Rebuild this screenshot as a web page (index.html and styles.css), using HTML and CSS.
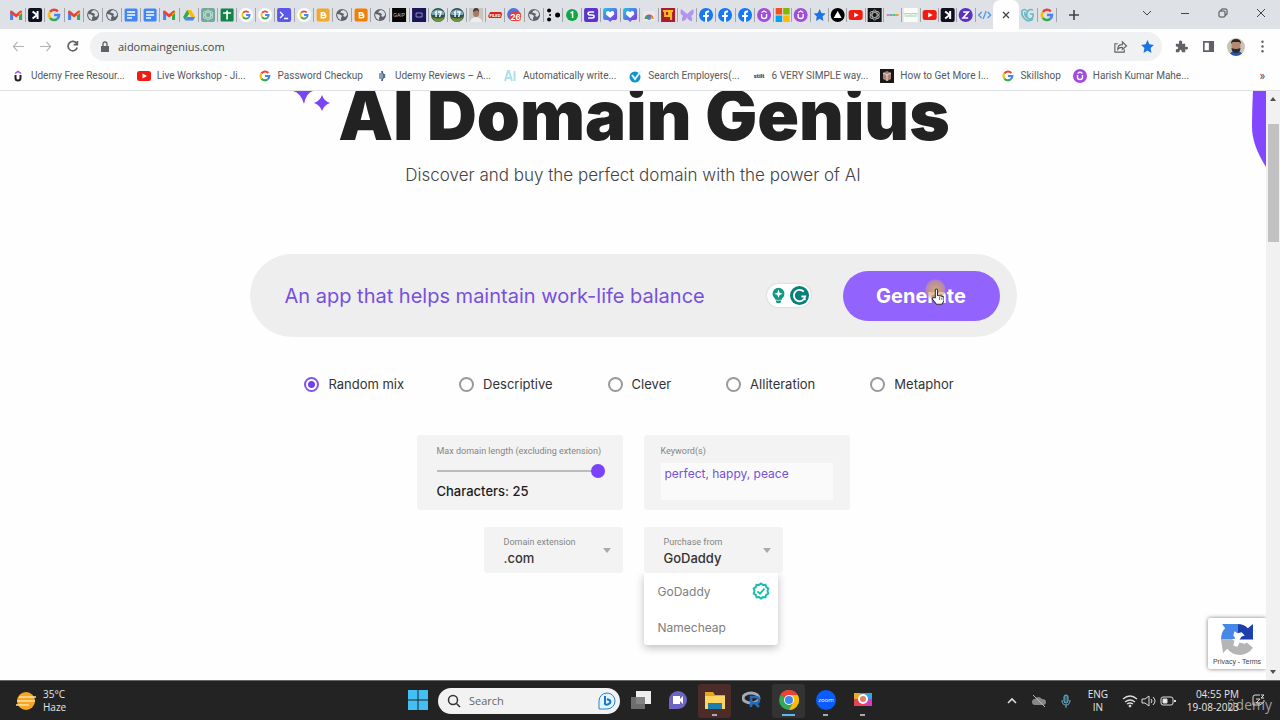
FILE: index.html
```html
<!DOCTYPE html>
<html lang="en">
<head>
    <meta charset="UTF-8">
    <meta name="viewport" content="width=device-width, initial-scale=1.0">
    <title>AI Domain Genius</title>
    <link rel="stylesheet" href="styles.css">
</head>
<body>
    <!-- Shared icons -->
    <svg class="sprite" aria-hidden="true">
        <symbol id="gmail" viewBox="0 0 14 14"><path d="M1 12V4l3 2v6z" fill="#4285f4"/><path d="M10 12V6l3-2v8z" fill="#34a853"/><path d="M1 5V3.200Q1.500 2 3 2.700L7 6l4-3.300Q12.500 2 13 3.200V5L7 9.500z" fill="#ea4335"/><path d="M10 6l3-2.300V5l-3 2.500z" fill="#fbbc04"/></symbol>
        <symbol id="kbox" viewBox="0 0 14 14"><rect width="14" height="14" rx="2" fill="#0d1020"/><path d="M9.500 3v8M9 7L4.500 3.500M9 7l-4.500 3.500" stroke="#fff" stroke-width="2" fill="none"/></symbol>
        <symbol id="google" viewBox="0 0 14 14"><g fill="none" stroke-width="2.500"><path d="M2.900 4A5 5 0 0 1 10.800 3.500" stroke="#ea4335"/><path d="M2.900 4A5 5 0 0 0 2.900 10" stroke="#fbbc04"/><path d="M2.900 10A5 5 0 0 0 10.200 10.800" stroke="#34a853"/><path d="M10.200 10.800A5 5 0 0 0 12 7H7" stroke="#4285f4"/></g></symbol>
        <symbol id="googlec" viewBox="0 0 14 14"><circle cx="7" cy="7" r="7" fill="#fff"/><use href="#google" x="2" y="2" width="10" height="10"/></symbol>
        <symbol id="globe" viewBox="0 0 14 14"><circle cx="7" cy="7" r="6" fill="#5f6368"/><path d="M2 6l3 .5L7 8l-1 1.500v2.500Q2 11 2 6zM8 2q4 1 4 5l-2 2-2-1 1-2-2-1-2-.5L6 3z" fill="#dee1e6"/></symbol>
        <symbol id="docs" viewBox="0 0 14 14"><rect x=".5" y=".5" width="13" height="13" rx="1.500" fill="#4285f4"/><path d="M3 4h8M3 7h8M3 10h5" stroke="#fff" stroke-width="1.400"/></symbol>
        <symbol id="drive" viewBox="0 0 14 14"><path d="M5 2h4L5 9l-2 3.500L1 9z" fill="#34a853"/><path d="M5 2h4l4 7H9z" fill="#fbbc04"/><path d="M5 9h8l-2 3.500H3z" fill="#4285f4"/></symbol>
        <symbol id="knot" viewBox="0 0 14 14"><g fill="none" stroke="currentColor"><ellipse cx="7" cy="7" rx="2.500" ry="5"/><ellipse cx="7" cy="7" rx="2.500" ry="5" transform="rotate(60 7 7)"/><ellipse cx="7" cy="7" rx="2.500" ry="5" transform="rotate(120 7 7)"/></g></symbol>
        <symbol id="gptgreen" viewBox="0 0 14 14"><rect width="14" height="14" rx="2" fill="#75a99c"/><use href="#knot" color="#b9d8cf"/></symbol>
        <symbol id="gptblack" viewBox="0 0 14 14"><rect width="14" height="14" fill="#151515"/><use href="#knot" color="#aaa"/></symbol>
        <symbol id="sheets" viewBox="0 0 14 14"><rect x=".5" y=".5" width="13" height="13" rx="1" fill="#11844a"/><path d="M3 5h8M7 2.500v9" stroke="#fff" stroke-width="1.700"/></symbol>
        <symbol id="term" viewBox="0 0 14 14"><rect width="14" height="14" rx="2" fill="#5b57e8"/><path d="M3 4l3 3-3 3M7 10.500h4" fill="none" stroke="#fff" stroke-width="1.300"/></symbol>
        <symbol id="blog" viewBox="0 0 14 14"><rect x=".5" y=".5" width="13" height="13" rx="2" fill="currentColor"/><path d="M4.500 4h3q2 0 2 2 1 .5 1 2 0 2.500-2.500 2.500H4.500z" fill="#fff"/><path d="M6 6h2M6 8.500h2.500" stroke="currentColor"/></symbol>
        <symbol id="gap" viewBox="0 0 14 14"><rect width="14" height="14" fill="#050505"/><text x="7" y="9" text-anchor="middle" font-size="5" fill="#bbb">GAIP</text></symbol>
        <symbol id="navy" viewBox="0 0 14 14"><rect width="14" height="14" fill="#191657"/><path d="M4 5h6v4H4z" fill="none" stroke="#918ac1"/></symbol>
        <symbol id="seventeen" viewBox="0 0 14 14"><circle cx="7" cy="7" r="7" fill="#314f42"/><path d="M1 4q6-5 12 0v3H1z" fill="#78a8bc"/><path d="M1 9q6 3 12 0-2 5-6 5t-6-5" fill="#6d953c"/><path d="M4 5l1-1v5M7 4h3L8.500 9" fill="none" stroke="#fff" stroke-width="1.400"/></symbol>
        <symbol id="portrait" viewBox="0 0 14 14"><path d="M0 0h14v14H0z" fill="#c8c5bd"/><path d="M1 14q0-4 6-5 6 1 6 5z" fill="#eee"/><ellipse cx="7" cy="5" rx="3" ry="4" fill="#a9786a"/><path d="M4 4q0-4 3-4t3 4L8 2z" fill="#423631"/></symbol>
        <symbol id="filed" viewBox="0 0 14 14"><path d="M2 4h11l1 2-1 4H1L0 8z" fill="#d52424"/><text x="7" y="8.500" text-anchor="middle" font-size="4" font-weight="700" fill="#fff">FILED</text></symbol>
        <symbol id="cal" viewBox="0 0 14 14"><circle cx="6.500" cy="6.500" r="6.500" fill="#4b72e8"/><rect x="3" y="4" width="11" height="9" rx="3" fill="#e83b35"/><text x="8.500" y="11.500" text-anchor="middle" font-size="8" font-weight="700" fill="#fff">26</text></symbol>
        <symbol id="dots" viewBox="0 0 14 14"><circle cx="3" cy="2.500" r="2"/><circle cx="3" cy="11.500" r="2"/><circle cx="11.500" cy="7" r="2.500"/><circle cx="4" cy="7" r="1"/></symbol>
        <symbol id="one" viewBox="0 0 14 14"><circle cx="7" cy="7" r="6" fill="#12a647"/><path d="M5.500 5L7.500 4v6" fill="none" stroke="#fff" stroke-width="1.500"/></symbol>
        <symbol id="sbox" viewBox="0 0 14 14"><rect width="14" height="14" rx="2" fill="#5a35cc"/><path d="M10 4H6Q4 4 4 5.500T6 7h2q2 0 2 1.500T8 10H4" fill="none" stroke="#fff" stroke-width="1.500"/></symbol>
        <symbol id="heart" viewBox="0 0 14 14"><defs><linearGradient id="hg" x2="1" y2="1"><stop stop-color="#20c7e8"/><stop offset="1" stop-color="#8c29df"/></linearGradient></defs><path d="M2 0h10q2 0 2 2v8q0 2-2 2H9l-2 2-2-2H2q-2 0-2-2V2Q0 0 2 0" fill="url(#hg)"/><path d="M7 10L3 6.500Q2.500 3 5 3L7 4l2-1Q11.500 3 11 6.500z" fill="#fff"/></symbol>
        <symbol id="store" viewBox="0 0 14 14"><path d="M1 3h12v10H1z" fill="#e8e9eb"/><path d="M2.500 11a4.500 4.500 0 0 1 9 0" fill="#ea4335"/><path d="M2.500 11l2.500-4 2 4z" fill="#34a853"/><path d="M11.500 11L9 8l-2 3z" fill="#fbbc04"/><circle cx="7" cy="10" r="2" fill="#4285f4"/></symbol>
        <symbol id="pnb" viewBox="0 0 14 14"><path d="M0 0h14v14H0z" fill="#a91c2d"/><path d="M2 3h10M10 3v9M4 4v4h4V4" fill="none" stroke="#fbbc23" stroke-width="2"/></symbol>
        <symbol id="butterfly" viewBox="0 0 14 14"><path d="M7 6L1 1Q-1 6 3 8q-2 2-1 5 4 0 5-4 1 4 5 4 1-3-1-5 4-2 2-7z" fill="#b293ed"/></symbol>
        <symbol id="fb" viewBox="0 0 14 14"><circle cx="7" cy="7" r="7" fill="#1877f2"/><path d="M6 14V9H4V7h2V5q0-3 4-2.500V4.500H9Q8 4.500 8 5.500V7h2L9.500 9H8v5z" fill="#fff"/></symbol>
        <symbol id="ucircle" viewBox="0 0 14 14"><circle cx="7" cy="7" r="7" fill="#a24bdc"/><path d="M4.500 6v2.500q0 2 2.500 2t2.500-2V6M4.500 4.500L7 3l2.500 1.500" fill="none" stroke="#fff" stroke-width="1.400"/></symbol>
        <symbol id="ms" viewBox="0 0 14 14"><path d="M0 0h6.500v6.500H0z" fill="#f25022"/><path d="M7.500 0H14v6.500H7.500z" fill="#7fba00"/><path d="M0 7.500h6.500V14H0z" fill="#00a4ef"/><path d="M7.500 7.500H14V14H7.500z" fill="#ffb900"/></symbol>
        <symbol id="star" viewBox="0 0 14 14"><path d="M7 1l1.800 4 4.200.5-3.100 3L10.700 13 7 10.700 3.300 13l.8-4.500L1 5.500 5.200 5z" fill="#1a73e8"/></symbol>
        <symbol id="tri" viewBox="0 0 14 14"><circle cx="7" cy="7" r="7"/><path d="M7 3l4 7H3z" fill="#fff"/></symbol>
        <symbol id="yt" viewBox="0 0 14 14"><rect y="2" width="14" height="10" rx="2.500" fill="#f11b12"/><path d="M5.500 4.500v5L10 7z" fill="#fff"/></symbol>
        <symbol id="bars" viewBox="0 0 14 14"><path d="M1 6h3v2H1z" fill="#ef7ca8"/><path d="M4 6h3v2H4z" fill="#58b4e8"/><path d="M7 6h3v2H7z" fill="#4ed25a"/><path d="M10 6h3v2h-3z" fill="#e8a33d"/></symbol>
        <symbol id="lines" viewBox="0 0 14 14"><path d="M0 0h14v14H0z" fill="#f8fbf8"/><path d="M0 6l4-.5L7 6l3-.5 4 .5M1 8h12" fill="none" stroke="#9dcead"/></symbol>
        <symbol id="zcirc" viewBox="0 0 14 14"><circle cx="7" cy="7" r="7" fill="#5a32bd"/><path d="M4.500 4h5l-5 6h5" fill="none" stroke="#fff" stroke-width="1.700"/></symbol>
        <symbol id="code" viewBox="0 0 14 14"><path d="M4 4L1 7l3 3M10 4l3 3-3 3M8.500 3l-3 8" fill="none" stroke="#4c98ed" stroke-width="1.300"/></symbol>
        <symbol id="swirl" viewBox="0 0 14 14"><path d="M12 2Q8 0 6 5q-1 5 2 6 5 0 4-5H9M6 3Q3 0 1 3q-1 5 4 9 4 2 7-1M4 4q-1 4 3 6" fill="none" stroke="#66bac4" stroke-width="1.600"/></symbol>
    </svg>

    <!-- Browser tabs -->
    <header class="tabstrip">
        <nav class="tabs tabs-first" aria-label="Pinned tabs">
            <svg><use href="#gmail"/></svg><svg><use href="#kbox"/></svg><svg><use href="#google"/></svg><svg><use href="#gmail"/></svg>
            <svg><use href="#globe"/></svg><svg><use href="#globe"/></svg><svg><use href="#docs"/></svg><svg><use href="#docs"/></svg>
            <svg><use href="#gmail"/></svg><svg><use href="#drive"/></svg><svg><use href="#gptgreen"/></svg><svg><use href="#sheets"/></svg>
            <svg><use href="#googlec"/></svg><svg><use href="#googlec"/></svg><svg><use href="#term"/></svg><svg><use href="#googlec"/></svg>
            <svg class="yellow"><use href="#blog"/></svg><svg><use href="#globe"/></svg><svg class="orange"><use href="#blog"/></svg><svg><use href="#globe"/></svg>
            <svg><use href="#gap"/></svg><svg><use href="#navy"/></svg><svg><use href="#seventeen"/></svg><svg><use href="#seventeen"/></svg>
            <svg><use href="#portrait"/></svg><svg><use href="#filed"/></svg><svg><use href="#cal"/></svg><svg><use href="#globe"/></svg>
            <svg><use href="#dots"/></svg><svg><use href="#one"/></svg><svg><use href="#sbox"/></svg><svg><use href="#heart"/></svg>
            <svg><use href="#heart"/></svg><svg><use href="#store"/></svg><svg><use href="#pnb"/></svg><svg><use href="#butterfly"/></svg>
            <svg><use href="#fb"/></svg><svg><use href="#fb"/></svg><svg><use href="#fb"/></svg><svg><use href="#ucircle"/></svg>
        </nav>
        <nav class="tabs tabs-second" aria-label="More tabs">
            <svg><use href="#ms"/></svg><svg><use href="#ucircle"/></svg><svg><use href="#star"/></svg><svg><use href="#tri"/></svg>
            <svg><use href="#yt"/></svg><svg><use href="#gptblack"/></svg><svg><use href="#bars"/></svg><svg><use href="#lines"/></svg>
            <svg><use href="#yt"/></svg><svg><use href="#kbox"/></svg><svg><use href="#zcirc"/></svg><svg><use href="#code"/></svg>
        </nav>
        <button class="tab-active" aria-label="Close tab"><svg viewBox="0 0 8 8"><path d="M1 1l6 6M7 1L1 7"/></svg></button>
        <nav class="tabs tabs-last" aria-label="Last tabs"><svg><use href="#swirl"/></svg><svg><use href="#google"/></svg></nav>
        <button class="tab-new" aria-label="New tab"><svg viewBox="0 0 10 10"><path d="M5 0v10M0 5h10"/></svg></button>
        <div class="window-controls">
            <button aria-label="Search tabs"><svg viewBox="0 0 10 10"><path d="M1 3l4 4 4-4"/></svg></button>
            <button aria-label="Minimize"><svg viewBox="0 0 10 10"><path d="M1 5.500h8"/></svg></button>
            <button aria-label="Restore"><svg viewBox="0 0 10 10"><rect x="1" y="3" width="6" height="6" rx="1"/><path d="M3 3V2q0-1 1-1h4q1 0 1 1v4q0 1-1 1H7"/></svg></button>
            <button aria-label="Close"><svg viewBox="0 0 10 10"><path d="M1 1l8 8M9 1L1 9"/></svg></button>
        </div>
    </header>

    <!-- Address bar -->
    <div class="toolbar">
        <button class="tool faded" aria-label="Back"><svg viewBox="0 0 16 16"><path d="M14 8H3M7 3L2.500 8 7 13"/></svg></button>
        <button class="tool faded" aria-label="Forward"><svg viewBox="0 0 16 16"><path d="M2 8h11M9 3l4.500 5L9 13"/></svg></button>
        <button class="tool" aria-label="Reload"><svg viewBox="0 0 16 16"><path class="thick" d="M12.500 5A5 5 0 1 0 13 9M13.200 2v4h-4"/></svg></button>
        <div class="omnibox">
            <svg class="lock" viewBox="0 0 10 12"><path d="M1 5h8v6H1z" fill="#5f6368"/><path d="M3 5V3q0-2 2-2t2 2v2" fill="none" stroke="#5f6368" stroke-width="1.300"/></svg>
            <input type="text" class="url" aria-label="Address" value="aidomaingenius.com">
            <button class="tool" aria-label="Share"><svg viewBox="0 0 16 16"><path d="M5 5H2v9h10v-3M5 11q0-5 5-5V3l4.500 4.500L10 11V9Q7 8.500 5 11z"/></svg></button>
            <button class="tool" aria-label="Bookmark"><svg class="big"><use href="#star"/></svg></button>
        </div>
        <button class="tool" aria-label="Extensions"><svg viewBox="0 0 16 16"><path d="M2 5h3.500Q4.500 1.500 7 1.500T8.500 5H12v3.500q3-1 3 1.200T12 11v3H8.500Q8 11.500 7 11.500T5.500 14H2v-3q2.500 0 2.500-1.500T2 8z" fill="#5f6368" stroke="none"/></svg></button>
        <button class="tool" aria-label="Side panel"><svg viewBox="0 0 16 16"><path class="thick" d="M3 3h10v10H3z"/><path d="M9 3h4v10H9z" fill="#5f6368"/></svg></button>
        <button class="tool" aria-label="Profile"><svg class="avatar" viewBox="0 0 18 18"><clipPath id="round"><circle cx="9" cy="9" r="9"/></clipPath><g clip-path="url(#round)"><path d="M0 0h18v18H0z" fill="#c9c3b3"/><path d="M2 18q1-5 7-5t7 5z" fill="#2857a8"/><ellipse cx="9" cy="8" rx="4.500" ry="5.500" fill="#b98870"/><path d="M4 6q0-5 5-5t5 5l-2-2H6z" fill="#2b2524"/><path d="M4.500 10q4.500 2 9 0 0 5-4.500 5t-4.500-5" fill="#252b37"/></g></svg></button>
        <button class="tool" aria-label="Menu"><svg viewBox="0 0 16 16"><g fill="#5f6368" stroke="none"><circle cx="8" cy="3" r="1.300"/><circle cx="8" cy="8" r="1.300"/><circle cx="8" cy="13" r="1.300"/></g></svg></button>
    </div>

    <!-- Bookmarks -->
    <nav class="bookmarks" aria-label="Bookmarks">
        <a href="#"><svg viewBox="0 0 14 14"><path d="M4.500 6v3q0 2.500 2.500 2.500T9.500 9V6" fill="none" stroke="#222" stroke-width="2"/><path d="M4 4.500L7 2.500l3 2" fill="none" stroke="#a24bdc" stroke-width="1.500"/></svg><span>Udemy Free Resour...</span></a>
        <a href="#"><svg><use href="#yt"/></svg><span>Live Workshop - Ji...</span></a>
        <a href="#"><svg viewBox="0 0 14 14"><use href="#google" x="1" y="1" width="12" height="12"/></svg><span>Password Checkup</span></a>
        <a href="#"><svg viewBox="0 0 14 14"><path d="M5 4v6M7 2v10M9.500 5v4" stroke="#55799c" stroke-width="1.400"/><path d="M7 2l2 5-2 5" fill="none" stroke="#344c74"/></svg><span>Udemy Reviews – A...</span></a>
        <a href="#"><svg viewBox="0 0 14 14"><path d="M2 12L5 2h1l3 10M3 9h5M11.500 2v10" fill="none" stroke="#afe0e5" stroke-width="2"/></svg><span>Automatically write...</span></a>
        <a href="#"><svg viewBox="0 0 14 14"><circle cx="7" cy="8" r="5.500" fill="#1592c9"/><path d="M4 6l3 4 6-8" fill="none" stroke="#d7f4ff" stroke-width="2"/></svg><span>Search Employers(...</span></a>
        <a href="#"><svg viewBox="0 0 14 14"><text x="7" y="9" text-anchor="middle" font-size="6" font-weight="800" fill="#27364f">stilt</text></svg><span>6 VERY SIMPLE way...</span></a>
        <a href="#"><svg viewBox="0 0 14 14"><path d="M0 0h14v14H0z" fill="#1b1818"/><path d="M3 4l4-2 4 2v6l-4 2-4-2z" fill="#ac8376"/><path d="M3 4l4 2 4-2M7 6v6" fill="none" stroke="#ddd"/></svg><span>How to Get More I...</span></a>
        <a href="#"><svg viewBox="0 0 14 14"><use href="#google" x="1" y="1" width="12" height="12"/></svg><span>Skillshop</span></a>
        <a href="#"><svg><use href="#ucircle"/></svg><span>Harish Kumar Mahe...</span></a>
        <button class="more" aria-label="More bookmarks">»</button>
    </nav>

    <!-- Page -->
    <div class="window">
        <main class="page">
            <svg class="blob" viewBox="0 0 14 76"><path d="M1 0h13v76Q0 54 0 36Q0 20 1 0" fill="#8348fd"/></svg>
            <div class="hero">
                <svg class="sparkles" viewBox="0 0 38 22"><path d="M0 0h20q-7 2-9 13Q8 2 0 0M29 4q2 6 8 8-6 2-8 8-2-6-8-8 6-2 8-8" fill="#7a44f8"/></svg>
                <h1>AI Domain Genius</h1>
                <p>Discover and buy the perfect domain with the power of AI</p>
            </div>

            <form class="generator">
                <div class="prompt">
                    <input type="text" class="prompt-text" aria-label="Describe your idea" value="An app that helps maintain work-life balance">
                    <span class="writer">
                        <svg viewBox="0 0 18 20"><circle cx="9" cy="8" r="7" fill="#109985"/><path d="M5 12h8v3H5zM6 16h6v2q-3 2-6 0z" fill="#109985"/><path d="M9 3l1.300 3.700L14 8l-3.700 1.300L9 13 7.700 9.300 4 8l3.700-1.300z" fill="#fff"/></svg>
                        <svg viewBox="0 0 20 20"><circle cx="10" cy="10" r="10" fill="#087f78"/><path d="M14.500 6A6 6 0 1 0 16 11h-4M15.500 11v4" fill="none" stroke="#fff" stroke-width="2"/></svg>
                    </span>
                    <button type="button" class="generate">Generate</button>
                    <span class="glow"></span>
                    <svg class="pointer" viewBox="0 0 12 16"><path d="M4 9V2q0-1 1-1t1 1v5q3 0 5 1 1 0 1 1v3l-2 3H5L1 10q0-1 1-1z" fill="#fff" stroke="#333"/><path d="M8 8v3M10 9v2" stroke="#333" stroke-width=".7"/></svg>
                </div>

                <fieldset class="styles">
                    <label><input type="radio" name="style" checked>Random mix</label>
                    <label><input type="radio" name="style">Descriptive</label>
                    <label><input type="radio" name="style">Clever</label>
                    <label><input type="radio" name="style">Alliteration</label>
                    <label><input type="radio" name="style">Metaphor</label>
                </fieldset>

                <div class="options">
                    <div class="card">
                        <label for="length">Max domain length (excluding extension)</label>
                        <input type="range" id="length" min="5" max="25" value="25">
                        <output for="length">Characters: 25</output>
                    </div>
                    <div class="card card-keywords">
                        <label for="keywords">Keyword(s)</label>
                        <textarea id="keywords">perfect, happy, peace</textarea>
                    </div>
                </div>
                <div class="options">
                    <div class="picker">
                        <div class="picker-field">
                            <label for="extension">Domain extension</label>
                            <select id="extension"><option>.com</option></select>
                        </div>
                        <span class="caret"></span>
                    </div>
                    <div class="picker">
                        <div class="picker-field">
                            <label for="registrar">Purchase from</label>
                            <select id="registrar"><option>GoDaddy</option><option>Namecheap</option></select>
                        </div>
                        <span class="caret"></span>
                        <div class="menu">
                            <button type="button">GoDaddy
                                <svg viewBox="0 0 18 18"><path d="M9 1.500l2 1.400 2.500-.1.700 2.300 2.100 1.400L15.500 9l.8 2.500-2.100 1.400-.7 2.300-2.500-.1-2 1.400-2-1.400-2.500.1-.7-2.300-2.100-1.400L2.500 9l-.8-2.500 2.100-1.400.7-2.300 2.500.1z" fill="none" stroke="#19bfae" stroke-width="2"/><path d="M5.500 9.300l2.500 2.400 4.500-5" fill="none" stroke="#19bfae" stroke-width="1.800"/></svg>
                            </button>
                            <button type="button">Namecheap</button>
                        </div>
                    </div>
                </div>
            </form>

            <div class="captcha">
                <svg viewBox="0 0 32 32"><path d="M0 16Q0 9 4 5L1 1h15v9l-3-2-1 4 2 3-4 1z" fill="#4688e8"/><path d="M16 1q6 0 10 4l5-4v15H18l2-3 3-1-3-3-4 1z" fill="#1c3fab"/><path d="M0 16h10l3 1-1 5 4 1 2-4 5 1 2-1 6 5q-5 7-13 7-7 0-12-6l-4 4z" fill="#b5b5b5"/></svg>
                <span><a href="#">Privacy</a> - <a href="#">Terms</a></span>
            </div>
        </main>
        <div class="scrollbar">
            <span class="arrow arrow-up"></span>
            <span class="thumb"></span>
            <span class="arrow arrow-down"></span>
        </div>
    </div>

    <!-- Taskbar -->
    <footer class="taskbar">
        <div class="weather">
            <svg viewBox="0 0 20 20"><circle cx="10" cy="10" r="9" fill="#f5a623"/><path d="M3 6h17M1 10h18M0 14h13" stroke="#ffe1a3" stroke-width="1.500"/></svg>
            <span>35°C<br>Haze</span>
        </div>
        <div class="apps">
            <button class="app" aria-label="Start"><svg viewBox="0 0 20 20" fill="#43bff4"><path d="M0 0h9.500v9.500H0zM10.500 0H20v9.500h-9.500zM0 10.500h9.500V20H0zM10.500 10.500H20V20h-9.500z"/></svg></button>
            <div class="search">
                <svg class="lens" viewBox="0 0 14 14"><circle cx="6" cy="6" r="4.500"/><path d="M9.500 9.500L13 13"/></svg>
                <input type="text" aria-label="Search" placeholder="Search">
                <svg class="bing" viewBox="0 0 18 18"><path d="M1 17V9a8 8 0 1 1 8 8z" fill="#e6f4fc" stroke="#2684d2"/><path d="M7 4v8q2 2 5-1 1-2-1-3L9 7" fill="none" stroke="#1777ce" stroke-width="2"/></svg>
            </div>
            <button class="app" aria-label="Task view"><svg viewBox="0 0 20 20"><path d="M5 1h15v13H5z" fill="#eee"/><path d="M0 7h14v12H0z" fill="#777" opacity=".9"/></svg></button>
            <button class="app" aria-label="Chat"><svg viewBox="0 0 20 20"><path d="M1 19V10a9 9 0 1 1 9 9z" fill="#6c65c4"/><path d="M5 6h7v8H5zM12 9l3-3v8l-3-3z" fill="#fff"/></svg></button>
            <button class="app app-files" aria-label="Files"><svg viewBox="0 0 20 20"><path d="M0 2h8l2 3h10v14H0z" fill="#e5a523"/><path d="M0 6h20v13H0z" fill="#fcd462"/><path d="M3 13h14v6H3z" fill="#1d7db1"/></svg></button>
            <button class="app" aria-label="R"><svg viewBox="0 0 20 20"><ellipse cx="9" cy="8" rx="8" ry="5" fill="none" stroke="#a6abb2" stroke-width="3"/><path d="M9 17V7h5q3 0 3 3t-3 3H9M13 13l4 4" fill="none" stroke="#266cb8" stroke-width="2.500"/></svg></button>
            <button class="app app-chrome" aria-label="Chrome"><svg viewBox="0 0 20 20"><circle cx="10" cy="10" r="10" fill="#34a853"/><path d="M10 10L1.300 5a10 10 0 0 1 17.400 0z" fill="#ea4335"/><path d="M10 5h8.700A10 10 0 0 1 10 20l4.300-7.500z" fill="#fbbc04"/><circle cx="10" cy="10" r="5" fill="#fff"/><circle cx="10" cy="10" r="4" fill="#4285f4"/></svg></button>
            <button class="app app-open" aria-label="Zoom"><svg viewBox="0 0 20 20"><circle cx="10" cy="10" r="10" fill="#0b5cff"/><text x="10" y="12" text-anchor="middle" font-size="6" fill="#fff">zoom</text></svg></button>
            <button class="app app-open" aria-label="Screen recorder"><svg viewBox="0 0 20 20"><path d="M1 3h18v13H1z" fill="#ea4154"/><path d="M1 3h6v6H1z" fill="#efa52b"/><path d="M7 3h6v6H7z" fill="#32ba62"/><path d="M13 3h6v6h-6z" fill="#3aa0e0"/><path d="M13 9h6v7h-6z" fill="#d93cb8"/><circle cx="10" cy="9" r="5" fill="#fff"/><circle cx="10" cy="9" r="3" fill="#eb7968"/></svg></button>
        </div>
        <div class="tray">
            <svg viewBox="0 0 16 16"><path d="M4 10l4-4 4 4" stroke-width="1.600"/></svg>
            <svg viewBox="0 0 16 16"><path d="M4 12q-3 0-3-3t3-3q3-4 7 0 4 0 4 3t-3 3z" fill="#888" stroke="none"/><path d="M2 2l12 12" stroke="#bbb"/></svg>
            <svg class="mic" viewBox="0 0 16 16"><rect x="6" y="2" width="4" height="8" rx="2" fill="#325e70"/><path d="M4 7q0 5 4 5t4-5M8 12v3"/></svg>
            <span class="lang">ENG<br>IN</span>
            <span class="status">
                <svg viewBox="0 0 16 16"><path d="M1 6q7-6 14 0M3 9q5-4 10 0M5 11q3-2 6 0" stroke-width="1.300"/><circle cx="8" cy="13" r="1" fill="#ddd"/></svg>
                <svg viewBox="0 0 16 16"><path d="M1 6h3l4-3v10l-4-3H1zM10 6q2 2 0 4M12 4q4 4 0 8"/></svg>
                <svg viewBox="0 0 16 16"><rect x="1" y="4" width="12" height="8" rx="2"/><path d="M3 6h4v4H3z" fill="#eee"/><path d="M15 7v2" stroke-width="2"/></svg>
            </span>
            <span class="clock">04:55 PM<br>19-08-2023</span>
            <svg viewBox="0 0 16 16"><path d="M10 2H5Q3 2 3 4v8h7l4-3V7M6 6h4L6 10h4M11 2h3l-3 3h3"/></svg>
            <span class="watermark">ûdemy</span>
        </div>
    </footer>
</body>
</html>
```

FILE: styles.css
```css
* {
    box-sizing: border-box;
}
body {
    margin: 0;
    min-height: 100vh;
    display: flex;
    flex-direction: column;
    font-family: Inter, "Liberation Sans", sans-serif;
    background-color: #fefefe;
    color: #222;
}
button {
    border: none;
    background: none;
    padding: 0;
    font-family: inherit;
    cursor: pointer;
}
svg {
    display: block;
    flex: none;
}
.sprite {
    position: absolute;
    width: 0;
    height: 0;
}

/* Tabs */
.tabstrip {
    display: flex;
    height: 29px;
    padding-left: 7px;
    background-color: #dee1e6;
}
.tabs {
    display: flex;
    align-items: center;
    min-width: 0;
}
.tabs svg {
    flex: 1;
    min-width: 0;
    height: 14px;
    border-right: 1px solid #a2a5a9;
}
.tabs-first {
    flex: 0 1 767px;
}
.tabs-second {
    flex: 0 1 219px;
}
.tabs-second svg:last-child {
    border-right: none;
}
.tabs-last {
    flex: 0 0 38px;
}
.yellow {
    color: #f2a72e;
}
.orange {
    color: #f57d00;
}
.tab-active {
    width: 26px;
    border-radius: 7px 7px 0 0;
    background-color: #fefefe;
}
.tab-active svg {
    width: 8px;
    margin: auto;
    stroke: #444;
    stroke-width: 1.3;
}
.tab-new {
    width: 34px;
}
.tab-new svg {
    width: 10px;
    margin: auto;
    stroke: #444;
    stroke-width: 1.6;
}
.window-controls {
    display: flex;
    margin-left: auto;
}
.window-controls button {
    width: 38px;
    padding-bottom: 3px;
}
.window-controls svg {
    width: 10px;
    margin: auto;
    fill: none;
    stroke: #444;
}

/* Toolbar */
.toolbar {
    display: flex;
    align-items: center;
    padding: 3px 4px 0 5px;
}
.tool {
    width: 27px;
    height: 27px;
}
.tool svg {
    width: 15px;
    height: 15px;
    margin: auto;
    fill: none;
    stroke: #5f6368;
    stroke-width: 1.2;
}
.tool .thick {
    stroke-width: 1.8;
}
.tool.faded svg {
    stroke: #b0b3b6;
}
.tool .avatar {
    width: 18px;
    height: 18px;
    stroke: none;
}
.tool .big {
    stroke: none;
}
.omnibox {
    flex: 1;
    display: flex;
    align-items: center;
    height: 29px;
    margin: 0 6px 0 4px;
    padding: 0 1px 0 10px;
    border-radius: 15px;
    background-color: #eff1f3;
}
.lock {
    width: 10px;
    height: 12px;
}
.url {
    flex: 1;
    padding: 0 8px;
    border: none;
    background: none;
    font: 11px "Open Sans", sans-serif;
    color: #45484c;
}

/* Bookmarks */
.bookmarks {
    display: flex;
    align-items: center;
    gap: 12px;
    height: 29px;
    padding: 0 15px 0 11px;
    font: 10px Roboto, "Open Sans", sans-serif;
    white-space: nowrap;
}
.bookmarks a {
    display: flex;
    align-items: center;
    gap: 6px;
    color: #55595e;
    text-decoration: none;
}
.bookmarks svg {
    width: 14px;
    height: 14px;
}
.more {
    margin-left: auto;
    font-size: 12px;
    color: #444;
}

/* Window and scrollbar */
.window {
    flex: 1;
    display: flex;
    border-top: 1px solid #dfe1e4;
}
.page {
    position: relative;
    flex: 1;
    overflow: hidden;
}
.scrollbar {
    width: 14px;
    display: flex;
    flex-direction: column;
    align-items: center;
    padding: 6px 0;
    background-color: #f1f1f1;
}
.arrow {
    border: 3px solid transparent;
}
.arrow-up {
    border-top: none;
    border-bottom: 4px solid #505050;
}
.arrow-down {
    margin-top: auto;
    border-bottom: none;
    border-top: 4px solid #505050;
}
.thumb {
    width: 11px;
    height: 118px;
    margin-top: 23px;
    background-color: #c1c1c1;
}

/* Hero */
.blob {
    position: absolute;
    top: 0;
    right: 0;
    width: 14px;
}
.hero {
    position: relative;
    width: 680px;
    max-width: 100%;
    margin: 0 auto;
    text-align: center;
}
.sparkles {
    position: absolute;
    top: 0;
    left: 0;
    width: 38px;
}
h1 {
    margin: 0 0 0 22px;
    font-size: 69px;
    font-weight: 900;
    line-height: 48px;
    white-space: nowrap;
}
.hero p {
    margin: 24px 0 0;
    font-size: 17px;
    font-weight: 300;
    line-height: 24px;
    color: #444;
}

/* Prompt */
.generator {
    display: flex;
    flex-direction: column;
    align-items: center;
    margin-top: 67px;
}
.prompt {
    position: relative;
    width: 767px;
    max-width: 100%;
    height: 83px;
    display: flex;
    align-items: center;
    padding: 0 17px 0 35px;
    border-radius: 42px;
    background-color: #eee;
}
.prompt-text {
    flex: 1;
    min-width: 0;
    padding: 0;
    border: none;
    background: none;
    font-family: inherit;
    font-size: 20px;
    color: #7650de;
}
.writer {
    display: flex;
    align-items: center;
    gap: 2px;
    margin-right: 32px;
    padding: 2px;
    border-radius: 12px;
    background-color: #fff;
    box-shadow: 0 0 2px rgba(0, 0, 0, 0.2);
}
.writer svg {
    width: 19px;
    height: 19px;
}
.writer svg:first-child {
    height: 17px;
}
.generate {
    width: 157px;
    height: 50px;
    border-radius: 25px;
    background-color: #9364fd;
    font-size: 20px;
    font-weight: 700;
    color: #fff;
}
.glow {
    position: absolute;
    right: 71px;
    top: 25px;
    width: 21px;
    height: 21px;
    border-radius: 50%;
    background: radial-gradient(rgba(225, 185, 75, 0.8), rgba(205, 160, 120, 0.6) 60%, transparent 72%);
}
.pointer {
    position: absolute;
    right: 73px;
    top: 34px;
    width: 13px;
}

/* Name style */
.styles {
    display: flex;
    gap: 55px;
    margin: 37px 8px 0 0;
    padding: 0;
    border: none;
}
.styles label {
    display: flex;
    align-items: center;
    gap: 9px;
    font-size: 13px;
    line-height: 20px;
    color: #333;
}
.styles input {
    appearance: none;
    width: 15px;
    height: 15px;
    margin: 0;
    border: 2px solid #999;
    border-radius: 50%;
}
.styles input:checked {
    border-color: #8357e8;
    background: radial-gradient(#7040e8 0 3px, transparent 4px);
}

/* Options */
.options {
    display: flex;
    gap: 21px;
    margin-top: 17px;
}
.styles + .options {
    margin-top: 41px;
}
.options label {
    font-family: Roboto, sans-serif;
    font-size: 9px;
    line-height: 12px;
    color: #858585;
    white-space: nowrap;
}
.card {
    display: flex;
    flex-direction: column;
    width: 206px;
    height: 75px;
    padding: 10px 17px 10px 20px;
    border-radius: 3px;
    background-color: #f3f3f3;
}
.card-keywords {
    padding-left: 17px;
}
.card input[type="range"] {
    appearance: none;
    width: 168px;
    height: 14px;
    margin: 7px 0 5px;
    background: linear-gradient(#bbb, #bbb) center / 100% 2px no-repeat;
}
.card input::-webkit-slider-thumb {
    appearance: none;
    width: 14px;
    height: 14px;
    border-radius: 50%;
    background-color: #7a42fb;
}
.card output {
    font-size: 13px;
    line-height: 16px;
    font-weight: 500;
    color: #1c1c1c;
}
.card textarea {
    height: 38px;
    margin-top: 6px;
    padding: 3px 4px;
    border: none;
    background-color: #fafafa;
    font-family: inherit;
    font-size: 12px;
    resize: none;
    color: #7650de;
}
.picker {
    position: relative;
    display: flex;
    align-items: center;
    width: 139px;
    height: 46px;
    padding: 0 12px 0 20px;
    border-radius: 3px;
    background-color: #f3f3f3;
}
.picker-field {
    display: flex;
    flex: 1;
    flex-direction: column;
    padding-top: 4px;
}
.picker select {
    appearance: none;
    padding: 0;
    border: none;
    background: none;
    font-family: inherit;
    font-size: 13px;
    line-height: 20px;
    font-weight: 500;
    color: #333;
}
.caret {
    border: 4px solid transparent;
    border-top: 5px solid #aaa;
    border-bottom: none;
}
.menu {
    position: absolute;
    top: 100%;
    left: 0;
    width: 134px;
    border-radius: 0 0 3px 3px;
    background-color: #fff;
    box-shadow: 0 3px 8px rgba(0, 0, 0, 0.25);
    clip-path: inset(0 -12px -14px);
}
.menu button {
    display: flex;
    align-items: center;
    justify-content: space-between;
    width: 100%;
    height: 36px;
    padding: 0 8px 0 14px;
    font-size: 12px;
    color: #808080;
}
.menu svg {
    width: 18px;
}

/* Captcha */
.captcha {
    position: absolute;
    right: 0;
    bottom: 11px;
    width: 58px;
    height: 51px;
    padding-top: 5px;
    border-radius: 2px 0 0 2px;
    background-color: #fff;
    box-shadow: 0 0 4px rgba(0, 0, 0, 0.5);
    font: 7px "Liberation Sans", sans-serif;
    text-align: center;
}
.captcha svg {
    width: 33px;
    margin: 0 auto 2px;
}
.captcha a {
    color: #444;
    text-decoration: none;
}

/* Taskbar */
.taskbar {
    display: grid;
    grid-template-columns: 1fr auto 1fr;
    align-items: center;
    height: 40px;
    border-top: 1px solid #666;
    background-color: #232323;
    font: 10px "Open Sans", sans-serif;
    line-height: 13px;
    color: #e6e6e6;
}
.weather {
    display: flex;
    align-items: center;
    gap: 7px;
    padding-left: 16px;
}
.weather svg {
    width: 20px;
}
.apps {
    display: flex;
    align-items: center;
    gap: 4px;
}
.app {
    width: 33px;
    height: 34px;
    border-radius: 3px;
    border-bottom: 2px solid transparent;
}
.app svg {
    width: 20px;
    margin: auto;
}
.app-files,
.app-chrome,
.app-open {
    background: linear-gradient(#aaa, #aaa) center bottom / 5px 2px no-repeat;
}
.app-files {
    background-color: #4b2c28;
}
.app-chrome {
    background: #333 linear-gradient(#5fb7ea, #5fb7ea) center bottom / 13px 2px no-repeat;
}
.search {
    display: flex;
    align-items: center;
    width: 182px;
    height: 26px;
    padding: 0 4px 0 9px;
    border-radius: 13px;
    background-color: #f2f2f2;
}
.lens {
    width: 14px;
    fill: none;
    stroke: #333;
    stroke-width: 1.5;
}
.search input {
    flex: 1;
    min-width: 0;
    padding: 0 8px;
    border: none;
    background: none;
    font: 11px "Open Sans", sans-serif;
}
.search input::placeholder {
    color: #666;
}
.bing {
    width: 18px;
}
.tray {
    position: relative;
    display: flex;
    align-items: center;
    justify-content: flex-end;
    gap: 11px;
    padding-right: 14px;
}
.tray svg {
    width: 16px;
    fill: none;
    stroke: #ddd;
}
.tray .mic {
    stroke: #70b5ce;
}
.lang {
    width: 26px;
    text-align: center;
}
.status {
    display: flex;
    gap: 3px;
}
.clock {
    text-align: right;
}
.watermark {
    position: absolute;
    right: 8px;
    bottom: -1px;
    font-size: 14px;
    line-height: 20px;
    color: rgba(200, 200, 200, 0.75);
}
```
